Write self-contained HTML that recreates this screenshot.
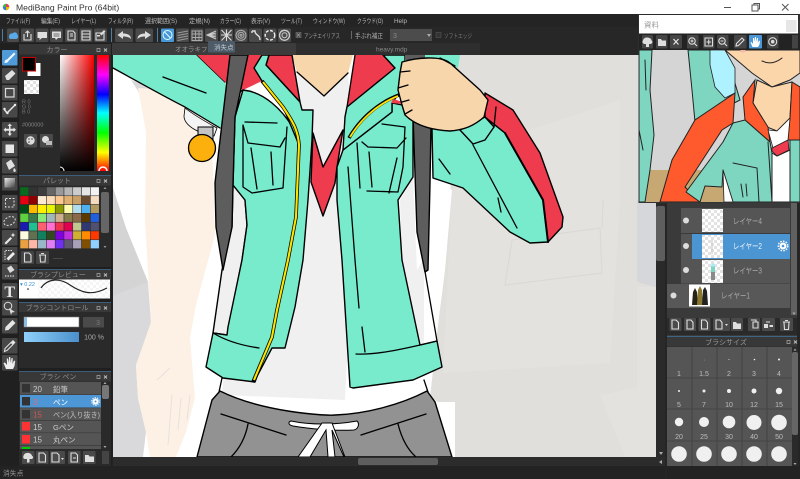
<!DOCTYPE html>
<html><head><meta charset="utf-8"><style>
html,body{margin:0;padding:0;background:#222;width:800px;height:479px;overflow:hidden}
svg{display:block}
text{font-family:"Liberation Sans","Noto Sans CJK JP",sans-serif;font-size:7px;fill:#b0b0b0}
.h{fill:#8d8d8d;text-anchor:middle}
.m{fill:#b8b8b8;font-size:6.5px}
.l{fill:#c0c0c0;font-size:8px}
.n{fill:#bdbdbd;font-size:7px;text-anchor:middle}
.k{fill:none;stroke:#000;stroke-width:1.3;stroke-linejoin:round;stroke-linecap:round}
.o{stroke:#000;stroke-width:1.4;stroke-linejoin:round}
.t{fill:#78ebcd}.r{fill:#ee3b4e}.s{fill:#f0f0f0}.d{fill:#5d5d5d}.c{fill:#f8d6ac}
.p{stroke:#222;stroke-width:1;stroke-linejoin:round}
.pk{fill:none;stroke:#222;stroke-width:1;stroke-linecap:round}
.pt{fill:#7fd6c0}
.b{fill:#4a4a4a}
.w{fill:#dedede}
.wk{fill:none;stroke:#dedede;stroke-width:1.1}
</style></head><body>
<svg width="800" height="479" viewBox="0 0 800 479" xmlns="http://www.w3.org/2000/svg">
<defs><pattern id="ck" width="6" height="6" patternUnits="userSpaceOnUse"><rect width="6" height="6" fill="#fff"/><rect width="3" height="3" fill="#e2e2e2"/><rect x="3" y="3" width="3" height="3" fill="#e2e2e2"/></pattern>
<linearGradient id="hue" x1="0" y1="0" x2="0" y2="1"><stop offset="0" stop-color="#f00"/><stop offset=".17" stop-color="#f0f"/><stop offset=".34" stop-color="#00f"/><stop offset=".5" stop-color="#0ff"/><stop offset=".67" stop-color="#0f0"/><stop offset=".84" stop-color="#ff0"/><stop offset="1" stop-color="#f00"/></linearGradient>
<linearGradient id="sv1" x1="0" y1="0" x2="1" y2="0"><stop offset="0" stop-color="#fff"/><stop offset="1" stop-color="#f00"/></linearGradient>
<linearGradient id="sv2" x1="0" y1="0" x2="0" y2="1"><stop offset="0" stop-color="#000" stop-opacity="0"/><stop offset="1" stop-color="#000"/></linearGradient>
<linearGradient id="bl" x1="0" y1="0" x2="1" y2="0"><stop offset="0" stop-color="#8fd0fa"/><stop offset="1" stop-color="#4a90cc"/></linearGradient>
<linearGradient id="gr" x1="0" y1="0" x2="1" y2="1"><stop offset="0" stop-color="#eee"/><stop offset="1" stop-color="#444"/></linearGradient>
</defs>

<rect width="800" height="479" fill="#222"/>

<!-- CANVAS -->
<rect x="113" y="55" width="543" height="402" fill="#fff"/>
<!-- left grey figure -->
<path d="M113,188 L126,228 L148,282 L151,322 L148,345 L136,365 L138,398 L146,432 L143,457 L113,457 Z" fill="#d9d9db"/>
<path d="M113,188 L126,228 L148,282 L113,296 Z" fill="#d4d4d4"/>
<path d="M131,80 L165,92 L140,94 Z" fill="#d9d9d9"/>
<!-- peach arm -->
<path d="M138,88 L146,132 L145,222 L151,322 L136,365 L138,398 L146,432 L150,457 L176,457 L186,432 L195,398 L190,338 L196,305 L215,235 L213,168 L210,110 L170,90 Z" fill="#fdf1e6"/>
<path d="M157,380 L170,368 M172,395 L168,445 M181,398 L178,430 M190,395 L187,420" stroke="#e6e2de" stroke-width="1" fill="none"/>
<!-- right background -->
<path d="M455,55 L656,55 L656,457 L455,457 L455,402 L438,402 L430,397 L437,333 L450,200 Z" fill="#e0dfdb"/>
<path d="M443,373 L610,363 L620,200 L620,100 L530,130 L452,190 Z" fill="#e3e2de"/>
<path d="M512,240 L600,228 L602,273 L505,285 Z M603,200 L602,228" fill="none" stroke="#d9d8d4" stroke-width="1"/>
<path d="M637,200 H656 V287 L637,282 Z" fill="#d6d7da"/>
<path d="M637,287 H656 V457 H625 L600,395 L637,388 Z" fill="#e3e2de"/>

<!-- left sleeve -->
<path class="t" d="M113,55 L197,55 L225,82 L235,117 L220,128 L185,107 L113,68 Z"/>
<path class="k" d="M197,55 L225,82 M113,68 C135,80 165,97 185,107 L220,128 M163,77 L206,93"/>
<path d="M185,108 C195,116 208,123 217,128 L214,136 C200,134 184,126 184,116 Z" fill="#f4f4f4" stroke="#000" stroke-width=".8"/>
<rect x="198" y="127" width="15" height="16" fill="#c4c4c4" stroke="#000" stroke-width="1"/>
<circle cx="202" cy="148" r="13.500" fill="#fbb00e" stroke="#000" stroke-width="1.300"/>

<!-- shirt -->
<path class="s" d="M297,72 L324,96 L348,73 L352,130 L350,300 L345,400 L222,395 L228,330 L300,100 Z"/>
<path class="s o" d="M233,185 L245,200 L247,225 L242,260 L227,335 L213,333 L222,270 L232,227 Z"/>
<path class="s" d="M400,200 L413,178 L417,270 L423,260 L437,341 L420,345 L402,260 Z"/>
<path d="M432,178 L452,190 L445,270 L437,333 L430,397 L424,340 L424,270 Z" fill="#fff"/>
<path class="k" d="M423,260 L437,341 M222,378 L219,392 M424,380 L428,392"/>

<!-- pants -->
<path d="M220,391 C262,412 325,416 335,415 C365,414 400,405 427,391 L435,402 L452,457 L197,457 L212,400 Z" fill="#929292" stroke="#000" stroke-width="1.400"/>
<path class="k" d="M221,414 L286,435 M361,435 L426,414 M248,424 C245,440 238,450 231,457 M398,424 C402,440 408,450 416,457"/>
<path d="M291,421 C310,425 335,425 357,421 C360,424 358,429 354,430 C335,431 310,429 293,426 C288,425 288,422 291,421 Z" fill="#fff" stroke="#000" stroke-width="1"/>
<path d="M322,423 L298,457 L310,457 L326,430 L328,457 L335,457 L332,430 L344,457 L345,457 L332,423 Z" fill="#fff" stroke="#000" stroke-width="1"/>

<!-- neck and red -->
<path class="c" d="M292,55 L353,55 L348,73 L324,96 L297,72 Z"/>
<path class="k" d="M297,72 L324,96 L348,73"/>
<path class="r" d="M197,55 L262,55 L254,68 L262,81 L243,90 L225,82 Z"/>
<path class="r o" d="M269,55 L292,55 L300,102 L266,65 Z"/>
<path class="r" d="M355,55 L383,55 L395,68 L347,107 Z"/>
<path class="k" d="M355,55 L347,107 L345,117 M383,55 L395,68"/>
<path class="r o" d="M313,133 L323,167 L343,130 L337,167 L335,183 L323,216 L311,182 Z"/>

<!-- left body -->
<path class="t o" d="M243,90 C262,92 283,107 298,137 L296,217 L288,260 L277,310 L272,337 L255,382 L223,378 L206,367 L213,333 L227,335 L228,327 L242,260 L247,225 L245,200 L233,185 L235,117 Z"/>
<path class="t o" d="M254,68 L262,55 L269,55 L266,65 L300,102 L302,110 L313,110 L312,140 L308,200 L303,260 L295,307 L285,348 L272,348 L254,382 L272,337 L296,217 L299,145 L283,107 L262,81 Z"/>
<path class="k" style="stroke-width:3.6;stroke-linecap:butt" d="M262,81 L283,107 C293,122 298,130 299,145 L296,217 L288,260 L277,310 L272,337 L253,382"/>
<path fill="none" stroke="#ffe200" stroke-width="2.100" d="M263,82 L283,107 C293,122 298,130 299,145 L296,217 L288,260 L277,310 L272,337 L254,380"/>
<path class="k" d="M245,122 L277,123 M243,125 L243,187 L252,193 L283,188 L287,127 M243,125 L248,143 L280,147 L285,138 M251,148 L257,189 M271,152 L273,185 M213,333 C228,342 245,346 259,348 M243,90 C238,92 235,100 235,117"/>

<!-- right body -->
<path class="t o" d="M343,150 L392,112 L392,103 L402,105 L413,120 L413,177 L398,200 L402,260 L420,345 L437,341 L442,367 L413,380 L353,388 L350,387 L342,260 L337,200 L337,167 Z"/>
<path class="t o" d="M383,55 L405,55 L405,95 L398,95 L392,103 L392,112 L343,150 L345,117 L347,107 L395,68 Z"/>
<path d="M393,99 L403,102 L402,104 L391,103 Z" fill="#ee3b4e"/>
<path fill="none" stroke="#000" stroke-width="3.400" d="M349,138 C358,122 375,104 399,95"/>
<path fill="none" stroke="#ffe200" stroke-width="1.800" d="M350,137 C359,122 375,105 398,96"/>
<path class="k" d="M382,124 L405,127 L403,167 L398,192 L367,191 M357,143 L360,188 M362,142 L368,147 L397,148 L406,138 M369,152 L372,187 M397,158 L389,193 M348,167 L355,260 L359,308 M362,327 L365,352 M356,354 C375,355 400,350 437,341"/>

<!-- left strap -->
<path class="d o" d="M230,55 L248,55 L235,117 L233,185 L232,227 L223,270 L216,227 L215,183 Z"/>
<!-- right strap -->
<path class="d o" d="M413,115 L431,125 L430,183 L428,270 L425,272 L417,232 Z"/>

<!-- right arm -->
<path class="t o" d="M432,128 L463,130 L485,117 L505,133 L543,200 L548,242 L530,243 L510,232 L463,188 L433,178 Z"/>
<path class="r o" d="M485,93 L513,110 L540,153 L563,217 L562,227 L548,242 L543,200 L505,133 L485,117 Z"/>
<path class="k" style="stroke-width:2" d="M505,133 L543,200 L548,242"/>
<path class="t o" d="M460,130 L485,117 L494,127 L485,140 L473,144 Z"/>
<path class="k" d="M496,107 L494,127 M473,145 L517,228 M498,198 L501,212 M439,159 L450,174"/>
<path class="t" d="M405,55 L460,55 L458,68 L440,60 L405,62 Z"/>
<path class="d" d="M405,55 H425 V60 H405 Z"/>
<path class="c o" d="M402,62 C415,58 440,55 450,63 L480,90 L488,100 L484,117 C475,125 465,130 450,131 C430,130 415,125 405,115 L402,105 L398,90 L400,73 Z"/>
<path class="k" d="M400,72 L410,71 M398,88 L408,85 M402,102 L409,100 M405,114 L412,110 M440,58 L455,66"/>

<!-- scrollbars -->
<rect x="656" y="55" width="11" height="403" fill="#2a2a2a"/>
<rect x="656" y="206" width="9" height="55" rx="2" fill="#5e5e5e"/>
<rect x="113" y="457" width="554" height="9" fill="#2c2c2c"/>
<rect x="358" y="458" width="80" height="7" rx="2" fill="#5e5e5e"/>
<path d="M659,452 L663,452 L661,455 Z M662,460 L662,464 L659,462 Z" fill="#aaa"/>

<!-- TITLE -->
<rect width="800" height="14" fill="#fff"/>
<circle cx="6" cy="7" r="3.200" fill="#3cb54a"/><path d="M6,3.800 A3.200,3.200 0 0 1 9.200,7 L6,7 Z" fill="#ee3b4e"/><path d="M6,7 L9.200,7 A3.200,3.200 0 0 1 6,10.200 Z" fill="#f7b500"/><path d="M6,7 L6,10.200 A3.200,3.200 0 0 1 2.800,7 Z" fill="#2c7fd8"/>
<text x="16" y="10.500" style="font-size:8.600px;fill:#333">MediBang Paint Pro (64bit)</text>
<path d="M724,7.500 L731,7.500" stroke="#555" stroke-width="1"/>
<rect x="752" y="5" width="6" height="6" fill="#fff" stroke="#555"/><path d="M754,5 L754,3.500 L759.500,3.500 L759.500,9 L758,9" fill="none" stroke="#555"/>
<path d="M782,4 L788.500,10.500 M788.500,4 L782,10.500" stroke="#555" stroke-width="1"/>

<!-- MENU -->
<rect y="14" width="800" height="13" fill="#242424"/>
<text class="m" x="6" y="23" textLength="24" lengthAdjust="spacingAndGlyphs">ファイル(F)</text>
<text class="m" x="41" y="23" textLength="19" lengthAdjust="spacingAndGlyphs">編集(E)</text>
<text class="m" x="71" y="23" textLength="25" lengthAdjust="spacingAndGlyphs">レイヤー(L)</text>
<text class="m" x="108" y="23" textLength="25" lengthAdjust="spacingAndGlyphs">フィルタ(R)</text>
<text class="m" x="145" y="23" textLength="32" lengthAdjust="spacingAndGlyphs">選択範囲(S)</text>
<text class="m" x="189" y="23" textLength="21" lengthAdjust="spacingAndGlyphs">定規(N)</text>
<text class="m" x="220" y="23" textLength="21" lengthAdjust="spacingAndGlyphs">カラー(C)</text>
<text class="m" x="251" y="23" textLength="19" lengthAdjust="spacingAndGlyphs">表示(V)</text>
<text class="m" x="281" y="23" textLength="21" lengthAdjust="spacingAndGlyphs">ツール(T)</text>
<text class="m" x="313" y="23" textLength="32" lengthAdjust="spacingAndGlyphs">ウィンドウ(W)</text>
<text class="m" x="357" y="23" textLength="26" lengthAdjust="spacingAndGlyphs">クラウド(O)</text>
<text class="m" x="394" y="23" textLength="13" lengthAdjust="spacingAndGlyphs">Help</text>

<!-- TOOLBAR -->
<rect y="27" width="800" height="16" fill="#272727"/>
<rect x="2" y="29" width="1" height="12" fill="#4d7ea8"/>
<g class="b">
<rect x="7" y="28.500" width="12" height="13.500" rx="1.500"/><rect x="21" y="28.500" width="13" height="13.500" rx="1.500"/><rect x="35.500" y="28.500" width="13" height="13.500" rx="1.500"/><rect x="50" y="28.500" width="13" height="13.500" rx="1.500"/><rect x="65" y="28.500" width="13" height="13.500" rx="1.500"/><rect x="79.500" y="28.500" width="13" height="13.500" rx="1.500"/><rect x="94" y="28.500" width="13" height="13.500" rx="1.500"/>
<rect x="115" y="28.500" width="18" height="13.500" rx="1.500"/><rect x="135.500" y="28.500" width="17.500" height="13.500" rx="1.500"/>
<rect x="176" y="28.500" width="13" height="13.500" rx="1.500"/><rect x="190.500" y="28.500" width="13" height="13.500" rx="1.500"/><rect x="205" y="28.500" width="13" height="13.500" rx="1.500"/><rect x="220" y="28.500" width="13" height="13.500" rx="1.500"/><rect x="234.500" y="28.500" width="13" height="13.500" rx="1.500"/><rect x="249" y="28.500" width="13" height="13.500" rx="1.500"/><rect x="263.500" y="28.500" width="13" height="13.500" rx="1.500"/><rect x="278" y="28.500" width="13" height="13.500" rx="1.500"/>
</g>
<path d="M9,37 C9,34 11,33 12.500,33.500 C14,31.500 17.500,32.500 17.500,35 C19,36 18,39 16,39 L11,39 C9.500,39 9,38 9,37 Z" fill="#5aa9e8"/>
<path class="wk" d="M24,34 L24,40 L31,40 L31,34 M27.500,37 L27.500,31 M25.500,33 L27.500,31 L29.500,33"/>
<path class="w" d="M37.500,32 L47,32 L47,38 L42,38 L39.500,40 L39.500,38 L37.500,38 Z"/>
<path class="w" d="M52,31.500 L61,31.500 L61,38 L58,38 L56,40 L55,38 L52,38 Z"/><path d="M53.500,34 L59.500,34 M53.500,36 L59.500,36" stroke="#4a4a4a" stroke-width=".8"/>
<path class="wk" d="M68,31 L73,31 L75,33 L75,40 L68,40 Z M70,34 L73,34 M70,36 L73,36"/>
<path class="wk" d="M82,31 L90,31 L90,40 L82,40 Z M82,34 L90,34 M82,37 L90,37"/>
<path class="wk" d="M96,33 L104,33 L104,40 L96,40 Z"/><path class="w" d="M100,34 L104,30 L105.500,31.500 L101.500,35.500 Z M97,35 h3 v1.500 h-3 Z"/>
<path class="w" d="M117.500,35 L123,31 L123,33.500 C128,33.500 131,35.500 131,39 C129,37 126,36.500 123,36.500 L123,39 Z"/>
<path class="w" d="M151,35 L145,31 L145,33.500 C140,33.500 137.500,35.500 137.500,39 C139.500,37 142,36.500 145,36.500 L145,39 Z"/>
<rect x="157" y="28" width="1" height="14" fill="#4d7ea8"/><rect x="111" y="28" width="1" height="14" fill="#4d7ea8"/>
<rect x="161" y="28.500" width="13" height="13.500" rx="1" fill="#4a97d8"/>
<circle cx="167.500" cy="35" r="4.500" fill="none" stroke="#dff" stroke-width="1"/><path d="M164.500,32 L170.500,38" stroke="#dff"/>
<path class="wk" style="stroke:#9a9a9a" d="M177.500,33 L188,31 M177.500,35.500 L188,33.500 M177.500,38 L188,36 M177.500,40.500 L188,38.500"/>
<path class="wk" style="stroke:#aaa;stroke-width:.9" d="M192,31 h10 v9.500 h-10 Z M195.500,31 v9.500 M199,31 v9.500 M192,34 h10 M192,37.500 h10"/>
<path class="wk" style="stroke:#ccc" d="M216,31 L207,35 L216,39 M216,35 L207,35 M216,33 L207,35 M216,37 L207,35"/>
<path class="wk" style="stroke:#ddd" d="M221.500,30 L231.500,40.500 M231.500,30 L221.500,40.500 M226.500,29.500 V41 M221,35 H232"/>
<circle cx="241" cy="35.300" r="5" class="wk" style="stroke:#aaa"/><circle cx="241" cy="35.300" r="3" class="wk" style="stroke:#aaa"/><circle cx="241" cy="35.300" r="1" class="wk" style="stroke:#aaa"/>
<path class="wk" style="stroke-width:1.400" d="M252,31 L255,31 C255,36 260,34 260,40 M252,31 v2"/>
<circle cx="270" cy="35.300" r="4.800" fill="none" stroke="#eee" stroke-width="1.400" stroke-dasharray="3 1.500"/>
<circle cx="284.500" cy="35.300" r="5" fill="none" stroke="#ccc" stroke-width="1.300"/><circle cx="284.500" cy="35.300" r="2.500" fill="none" stroke="#ccc" stroke-width="1"/>
<rect x="296" y="32.500" width="5" height="5" fill="#444" stroke="#777" stroke-width=".6"/><path d="M297,33.500 L300,36.500 M300,33.500 L297,36.500" stroke="#aaa" stroke-width=".6"/>
<text x="304" y="38" textLength="36" lengthAdjust="spacingAndGlyphs" style="font-size:6.500px;fill:#9a9a9a">アンチエイリアス</text>
<rect x="351" y="31" width="1" height="8" fill="#666"/>
<text x="355" y="38" textLength="28" lengthAdjust="spacingAndGlyphs" style="font-size:6.500px;fill:#b0b0b0">手ぶれ補正</text>
<rect x="390" y="29" width="42" height="12" fill="#4c4c4c"/>
<text x="393" y="38" style="font-size:7px;fill:#888">3</text><path d="M427,34 L431,34 L429,37 Z" fill="#aaa"/>
<rect x="436" y="32.500" width="5" height="5" fill="#333" stroke="#555" stroke-width=".6"/>
<text x="444" y="38" textLength="28" lengthAdjust="spacingAndGlyphs" style="font-size:6.500px;fill:#777">ソフトエッジ</text>

<!-- TABS -->
<rect x="112" y="43" width="544" height="12" fill="#272727"/>
<rect x="112" y="43" width="184" height="12" rx="1" fill="#3c3c3c"/>
<rect x="296" y="43" width="184" height="12" fill="#2e2e2e"/>
<text x="175" y="51.500" style="font-size:6.500px;fill:#999">オオラキファクト</text>
<text x="376" y="51.500" style="font-size:6.500px;fill:#888">heavy.mdp</text>
<rect x="208" y="41" width="27" height="11.500" rx="1" fill="#4d5b69"/>
<text x="214" y="49.500" style="font-size:6.500px;fill:#c3ccd4">消失点</text>

<!-- TOOLS -->
<rect x="0" y="43" width="18" height="423" fill="#202020"/>
<g fill="#484848">
<rect x="2" y="68" width="15.500" height="15.500" rx="1"/><rect x="2" y="85" width="15.500" height="15.500" rx="1"/><rect x="2" y="102" width="15.500" height="15.500" rx="1"/><rect x="2" y="122" width="15.500" height="15.500" rx="1"/><rect x="2" y="141" width="15.500" height="15.500" rx="1"/><rect x="2" y="158" width="15.500" height="15.500" rx="1"/><rect x="2" y="175" width="15.500" height="15.500" rx="1"/><rect x="2" y="195" width="15.500" height="15.500" rx="1"/><rect x="2" y="213" width="15.500" height="15.500" rx="1"/><rect x="2" y="230" width="15.500" height="15.500" rx="1"/><rect x="2" y="247" width="15.500" height="15.500" rx="1"/><rect x="2" y="264" width="15.500" height="15.500" rx="1"/><rect x="2" y="283" width="15.500" height="15.500" rx="1"/><rect x="2" y="300" width="15.500" height="15.500" rx="1"/><rect x="2" y="318" width="15.500" height="15.500" rx="1"/><rect x="2" y="338" width="15.500" height="15.500" rx="1"/><rect x="2" y="355" width="15.500" height="15.500" rx="1"/>
</g>
<rect x="2" y="50" width="15.500" height="15.500" rx="1" fill="#4f9bd9"/>
<path d="M4.500,63 C4.500,60 6,59.500 7,59.500 L14,52.500 L15.500,54 L8.500,61 C8.500,62 7,63 4.500,63 Z" fill="#eef6ff"/>
<path d="M5,76 L12,70 L15.500,73.500 L9,80 L6.500,80 Z" fill="#e0e0e0"/>
<rect x="5.500" y="88.500" width="8.500" height="8.500" fill="none" stroke="#ddd" stroke-width="1.200"/>
<path d="M4,109 L7,113 L15,105" fill="none" stroke="#e6e6e6" stroke-width="1.500"/><circle cx="4.500" cy="109" r="1.200" fill="#eee"/><circle cx="7.500" cy="113" r="1.200" fill="#eee"/><circle cx="15" cy="105" r="1.200" fill="#eee"/>
<path d="M9.750,123.500 L12,126 L10.500,126 L10.500,128.800 L13.500,128.800 L13.500,127.500 L16,129.800 L13.500,132 L13.500,130.800 L10.500,130.800 L10.500,133.500 L12,133.500 L9.750,136 L7.500,133.500 L9,133.500 L9,130.800 L6,130.800 L6,132 L3.500,129.800 L6,127.500 L6,128.800 L9,128.800 L9,126 L7.500,126 Z" fill="#e4e4e4"/>
<rect x="5.500" y="144.500" width="8.500" height="8.500" fill="#e6e6e6"/>
<path d="M6,163 L11,159.500 L15,166 L9,170 Z" fill="#e0e0e0"/><path d="M14,168 C16,169 16.500,172 14.500,172 C13,172 13,170 14,168 Z" fill="#ddd"/>
<rect x="4.500" y="178" width="10.500" height="9.500" fill="url(#gr)"/>
<rect x="5.500" y="198.500" width="8.500" height="8.500" fill="none" stroke="#ddd" stroke-width="1" stroke-dasharray="2 1.500"/>
<ellipse cx="9.500" cy="221" rx="6" ry="4" transform="rotate(-25 9.500 221)" fill="none" stroke="#ddd" stroke-width="1" stroke-dasharray="2 1.500"/>
<path d="M4.500,243 L10.500,237 L12,238.500 L6,244.500 Z" fill="#e6e6e6"/><path d="M13,232.500 L13.600,234.500 L15.500,235 L13.600,235.600 L13,237.500 L12.400,235.600 L10.500,235 L12.400,234.500 Z" fill="#fff"/>
<path d="M5,260 L5,250.500 L12,250.500" fill="none" stroke="#ddd" stroke-dasharray="1.500 1"/><path d="M6.500,258.500 L13,252 L15,254 L8.500,260.500 Z" fill="#eee"/>
<path d="M7,268 L11,265.500 L14.500,270 L10,273 Z" fill="#ddd"/><path d="M5,276 h10" stroke="#bbb" stroke-width="1.500" stroke-dasharray="1.500 1"/>
<text x="9.750" y="297" style="font-family:'Liberation Serif',serif;font-size:16px;font-weight:bold;fill:#e8e8e8;text-anchor:middle">T</text>
<circle cx="8" cy="306" r="3.800" fill="none" stroke="#ddd" stroke-width="1"/><path d="M9,308 L15,312 L12,312.500 L11,315 Z" fill="#ddd"/>
<path d="M5,330.500 L5.500,327 L12.500,320 L15.500,323 L8.500,330 Z" fill="#e6e6e6"/>
<path d="M4.500,351.500 L5,348.500 L11,342.500 L13,344.500 L7,350.500 Z" fill="none" stroke="#e6e6e6"/><path d="M11,342 L13,340 L15.500,342.500 L13.500,344.500 Z" fill="#e6e6e6"/>
<path d="M6,369 L3.500,363 L5,362.500 L7,365 L6.800,358.500 L8,358.500 L8.800,363 L9,357 L10.200,357 L10.700,363 L11.500,358 L12.700,358 L12.500,364 L14,360.500 L15.200,361 L14.500,366 L13,369 Z" fill="#eee"/>

<!-- COLOR PANEL -->
<rect x="18" y="43" width="94" height="423" fill="#1f1f1f"/>
<rect x="19" y="44" width="92" height="131" fill="#2a2a2a"/>
<rect x="19" y="44" width="92" height="10.500" fill="#383838"/>
<text class="h" x="57" y="52">カラー</text>
<path d="M97,48.500 h3 v3 h-3 Z" fill="none" stroke="#aaa" stroke-width=".7"/><path d="M104,48.500 l3,3 m0,-3 l-3,3" stroke="#bbb" stroke-width="1"/>
<rect x="27.500" y="63" width="13" height="13" fill="#fff"/>
<rect x="22.500" y="57.500" width="13" height="13.500" fill="#000" stroke="#c00" stroke-width="1"/>
<rect x="24" y="80" width="15" height="14" fill="url(#ck)"/>
<text x="22" y="103.500" style="font-size:5.500px;fill:#777">R 0</text><text x="22" y="108.500" style="font-size:5.500px;fill:#777">G 0</text><text x="22" y="113.500" style="font-size:5.500px;fill:#777">B 0</text>
<text x="22" y="126.500" style="font-size:5.500px;fill:#888">#000000</text>
<rect x="24" y="134" width="13" height="13.500" rx="1" fill="#4a4a4a"/><rect x="40" y="134" width="13" height="13.500" rx="1" fill="#4a4a4a"/>
<circle cx="30.500" cy="140.500" r="4.200" fill="#ddd"/><circle cx="29" cy="139" r=".8" fill="#444"/><circle cx="32" cy="139" r=".8" fill="#444"/><circle cx="29" cy="142" r=".8" fill="#444"/>
<circle cx="45.500" cy="139.500" r="3.500" fill="#ddd"/><rect x="46" y="141" width="6" height="4" fill="#bbb"/>
<rect x="60" y="55" width="34" height="116" fill="url(#sv1)"/><rect x="60" y="55" width="34" height="116" fill="url(#sv2)"/>
<path d="M60,167 A4,4 0 0 1 64,171" fill="none" stroke="#fff" stroke-width="1"/>
<rect x="97" y="55" width="12" height="116" fill="url(#hue)"/>
<path d="M99,171 A4,4 0 0 1 107,171" fill="none" stroke="#fff" stroke-width="1.500"/>

<!-- PALETTE -->
<rect x="19" y="175" width="92" height="92" fill="#2a2a2a"/>
<rect x="19" y="175" width="92" height="10.500" fill="#383838"/><rect x="19" y="175" width="92" height=".7" fill="#3f6f96"/>
<text class="h" x="57" y="183">パレット</text>
<path d="M97,179.500 h3 v3 h-3 Z" fill="none" stroke="#aaa" stroke-width=".7"/><path d="M104,179.500 l3,3 m0,-3 l-3,3" stroke="#bbb" stroke-width="1"/>
<g stroke="#2a2a2a" stroke-width=".5">
<rect x="20" y="187" width="8.800" height="8.800" fill="#0a6b1e"/><rect x="28.800" y="187" width="8.800" height="8.800" fill="#333"/><rect x="37.600" y="187" width="8.800" height="8.800" fill="#3c3c3c"/><rect x="46.400" y="187" width="8.800" height="8.800" fill="#666"/><rect x="55.200" y="187" width="8.800" height="8.800" fill="#999"/><rect x="64" y="187" width="8.800" height="8.800" fill="#b5b5b5"/><rect x="72.800" y="187" width="8.800" height="8.800" fill="#ccc"/><rect x="81.600" y="187" width="8.800" height="8.800" fill="#e5e5e5"/><rect x="90.400" y="187" width="8.800" height="8.800" fill="#f2f2f2"/>
<rect x="20" y="195.800" width="8.800" height="8.800" fill="#e60012"/><rect x="28.800" y="195.800" width="8.800" height="8.800" fill="#8f0000"/><rect x="37.600" y="195.800" width="8.800" height="8.800" fill="#fde8d2"/><rect x="46.400" y="195.800" width="8.800" height="8.800" fill="#fcdcb8"/><rect x="55.200" y="195.800" width="8.800" height="8.800" fill="#fbc78f"/><rect x="64" y="195.800" width="8.800" height="8.800" fill="#e0b070"/><rect x="72.800" y="195.800" width="8.800" height="8.800" fill="#c9a067"/><rect x="81.600" y="195.800" width="8.800" height="8.800" fill="#6a4a30"/><rect x="90.400" y="195.800" width="8.800" height="8.800" fill="#f4dcc0"/>
<rect x="20" y="204.600" width="8.800" height="8.800" fill="#004d1a"/><rect x="28.800" y="204.600" width="8.800" height="8.800" fill="#fdbb00"/><rect x="37.600" y="204.600" width="8.800" height="8.800" fill="#fff000"/><rect x="46.400" y="204.600" width="8.800" height="8.800" fill="#e6f500"/><rect x="55.200" y="204.600" width="8.800" height="8.800" fill="#8a9a00"/><rect x="64" y="204.600" width="8.800" height="8.800" fill="#fffcb0"/><rect x="72.800" y="204.600" width="8.800" height="8.800" fill="#b0dcf0"/><rect x="81.600" y="204.600" width="8.800" height="8.800" fill="#4fb0f0"/><rect x="90.400" y="204.600" width="8.800" height="8.800" fill="#b09a60"/>
<rect x="20" y="213.400" width="8.800" height="8.800" fill="#5fd040"/><rect x="28.800" y="213.400" width="8.800" height="8.800" fill="#3a7a4a"/><rect x="37.600" y="213.400" width="8.800" height="8.800" fill="#88e878"/><rect x="46.400" y="213.400" width="8.800" height="8.800" fill="#a0b8b8"/><rect x="55.200" y="213.400" width="8.800" height="8.800" fill="#cdb090"/><rect x="64" y="213.400" width="8.800" height="8.800" fill="#857a4a"/><rect x="72.800" y="213.400" width="8.800" height="8.800" fill="#8a6a4a"/><rect x="81.600" y="213.400" width="8.800" height="8.800" fill="#5a3a00"/><rect x="90.400" y="213.400" width="8.800" height="8.800" fill="#2060e0"/>
<rect x="20" y="222.200" width="8.800" height="8.800" fill="#1a1ab0"/><rect x="28.800" y="222.200" width="8.800" height="8.800" fill="#20c090"/><rect x="37.600" y="222.200" width="8.800" height="8.800" fill="#ff6070"/><rect x="46.400" y="222.200" width="8.800" height="8.800" fill="#ff70d0"/><rect x="55.200" y="222.200" width="8.800" height="8.800" fill="#f03050"/><rect x="64" y="222.200" width="8.800" height="8.800" fill="#e00050"/><rect x="72.800" y="222.200" width="8.800" height="8.800" fill="#c0c890"/><rect x="81.600" y="222.200" width="8.800" height="8.800" fill="#303870"/><rect x="90.400" y="222.200" width="8.800" height="8.800" fill="#505070"/>
<rect x="20" y="231" width="8.800" height="8.800" fill="#fffde0"/><rect x="28.800" y="231" width="8.800" height="8.800" fill="#607050"/><rect x="37.600" y="231" width="8.800" height="8.800" fill="#108060"/><rect x="46.400" y="231" width="8.800" height="8.800" fill="#304a20"/><rect x="55.200" y="231" width="8.800" height="8.800" fill="#8000e0"/><rect x="64" y="231" width="8.800" height="8.800" fill="#c030e0"/><rect x="72.800" y="231" width="8.800" height="8.800" fill="#d0b030"/><rect x="81.600" y="231" width="8.800" height="8.800" fill="#ff8c00"/><rect x="90.400" y="231" width="8.800" height="8.800" fill="#ff3800"/>
<rect x="20" y="239.800" width="8.800" height="8.800" fill="#e8a040"/><rect x="28.800" y="239.800" width="8.800" height="8.800" fill="#ffb8a8"/><rect x="37.600" y="239.800" width="8.800" height="8.800" fill="#98b8c8"/><rect x="46.400" y="239.800" width="8.800" height="8.800" fill="#e080f0"/><rect x="55.200" y="239.800" width="8.800" height="8.800" fill="#7030f0"/><rect x="64" y="239.800" width="8.800" height="8.800" fill="#605870"/><rect x="72.800" y="239.800" width="8.800" height="8.800" fill="#a8a0b8"/><rect x="81.600" y="239.800" width="8.800" height="8.800" fill="#805000"/><rect x="90.400" y="239.800" width="8.800" height="8.800" fill="#90d0ff"/>
</g>
<rect x="101" y="192" width="8" height="41" rx="2" fill="#666"/>
<path d="M103.500,189 L106.500,189 L105,187 Z M103.500,246 L106.500,246 L105,248 Z" fill="#999"/>
<rect x="21" y="251" width="13" height="13" rx="1" fill="#444"/><rect x="36" y="251" width="13" height="13" rx="1" fill="#444"/>
<path class="wk" d="M24.500,253 L29,253 L31,255 L31,262 L24.500,262 Z"/><path class="wk" d="M39,255 L46,255 M40,255 L40.500,262 L45,262 L45.500,255 M41,253.500 L44,253.500"/>
<text x="53" y="260" style="font-size:6px;fill:#777">-----</text>

<!-- BRUSH PREVIEW -->
<rect x="19" y="269" width="92" height="30" fill="#2a2a2a"/>
<rect x="19" y="269" width="92" height="10.500" fill="#383838"/><rect x="19" y="269" width="92" height=".7" fill="#3f6f96"/>
<text class="h" x="58" y="277">ブラシプレビュー</text>
<path d="M97,273.500 h3 v3 h-3 Z" fill="none" stroke="#aaa" stroke-width=".7"/><path d="M104,273.500 l3,3 m0,-3 l-3,3" stroke="#bbb" stroke-width="1"/>
<rect x="19" y="279.500" width="91" height="19" fill="#fff"/><rect x="38" y="279.500" width="72" height="19" fill="url(#ck)" opacity=".35"/>
<text x="20" y="286" style="font-size:5.500px;fill:#3a8fd0">▾ 0.22</text><circle cx="28" cy="289" r=".8" fill="#111"/>
<path d="M41,288 C48,278 60,278 70,285 C82,293 92,296 107,288" fill="none" stroke="#222" stroke-width="1.200"/>

<!-- BRUSH CONTROL -->
<rect x="19" y="302" width="92" height="66" fill="#2a2a2a"/>
<rect x="19" y="302" width="92" height="10" fill="#383838"/><rect x="19" y="302" width="92" height=".7" fill="#3f6f96"/>
<text class="h" x="57" y="310">ブラシコントロール</text>
<path d="M97,306.500 h3 v3 h-3 Z" fill="none" stroke="#aaa" stroke-width=".7"/><path d="M104,306.500 l3,3 m0,-3 l-3,3" stroke="#bbb" stroke-width="1"/>
<rect x="24" y="317" width="55" height="10" fill="#fff" stroke="#777" stroke-width=".6"/><rect x="24.500" y="317.500" width="2.500" height="9" fill="#7fc0f0"/>
<rect x="83" y="317" width="21" height="10.500" fill="#4a4a4a"/><text x="100" y="325" style="font-size:7px;fill:#777;text-anchor:end">3</text>
<rect x="24" y="332" width="55" height="10" fill="url(#bl)"/>
<text x="104" y="339.500" style="font-size:7px;fill:#aaa;text-anchor:end">100 %</text>

<!-- BRUSH LIST -->
<rect x="19" y="371" width="92" height="95" fill="#2a2a2a"/>
<rect x="19" y="371" width="92" height="10.500" fill="#383838"/><rect x="19" y="371" width="92" height=".7" fill="#3f6f96"/>
<text class="h" x="58" y="379">ブラシ ペン</text>
<path d="M97,375.500 h3 v3 h-3 Z" fill="none" stroke="#aaa" stroke-width=".7"/><path d="M104,375.500 l3,3 m0,-3 l-3,3" stroke="#bbb" stroke-width="1"/>
<rect x="20" y="382" width="81" height="67" fill="#555"/>
<rect x="20" y="395" width="81" height="12.500" fill="#4d97d6"/>
<path d="M20,394.700 H101 M20,407.800 H101 M20,420.500 H101 M20,432.800 H101 M20,445.500 H101" stroke="#3a3a3a" stroke-width=".7"/>
<rect x="22" y="384" width="8" height="8.500" fill="#333"/><rect x="22" y="397" width="8" height="8.500" fill="#333"/><rect x="22" y="410" width="8" height="8.500" fill="#333"/><rect x="22" y="422" width="8" height="8.500" fill="#f33"/><rect x="22" y="435" width="8" height="8.500" fill="#f33"/><rect x="22" y="447" width="8" height="2" fill="#0c0"/>
<text x="33" y="392" style="font-size:8px;fill:#ccc">20</text><text x="53" y="392" style="font-size:7.500px;fill:#ccc">鉛筆</text>
<text x="33" y="405" style="font-size:8px;fill:#e66">3</text><text x="53" y="405" style="font-size:7.500px;fill:#fff">ペン</text>
<text x="33" y="417.500" style="font-size:8px;fill:#c55">15</text><text x="53" y="417.500" style="font-size:7.500px;fill:#bbb" textLength="47" lengthAdjust="spacingAndGlyphs">ペン(入り抜き)</text>
<text x="33" y="430" style="font-size:8px;fill:#ccc">15</text><text x="53" y="430" style="font-size:7.500px;fill:#ccc">Gペン</text>
<text x="33" y="442.500" style="font-size:8px;fill:#ccc">15</text><text x="53" y="442.500" style="font-size:7.500px;fill:#ccc">丸ペン</text>
<circle cx="95.500" cy="401.500" r="3" fill="#fff"/><circle cx="95.500" cy="401.500" r="3.800" fill="none" stroke="#fff" stroke-width="1" stroke-dasharray="1.400 1"/><circle cx="95.500" cy="401.500" r="1" fill="#4d97d6"/>
<rect x="102" y="385" width="7" height="14" rx="2" fill="#777"/><path d="M103.500,384 L106.500,384 L105,382 Z M103.500,446 L106.500,446 L105,448 Z" fill="#aaa"/>
<g fill="#4a4a4a"><rect x="22" y="451" width="12.500" height="13" rx="1"/><rect x="36" y="451" width="12.500" height="13" rx="1"/><rect x="50" y="451" width="15" height="13" rx="1"/><rect x="68" y="451" width="12.500" height="13" rx="1"/><rect x="83" y="451" width="12.500" height="13" rx="1"/><rect x="102" y="451" width="7" height="13" fill="#444"/></g>
<path class="w" d="M23.500,456 C24,453.500 26,453 27,453 C29,452.500 32,454 32,456 C33.500,456 33.500,459 31.500,459 L29.500,459 L29.500,462.500 L27,462.500 L27,459 L25,459 C23,459 23,456.500 23.500,456 Z"/>
<path class="wk" d="M39,453 L43.500,453 L45.500,455 L45.500,462 L39,462 Z"/>
<path class="wk" d="M52,453 L57,453 L59,455 L59,462 L52,462 Z"/><path class="w" d="M61,458 l3,0 l-1.500,2 Z"/>
<path class="wk" d="M71,453 L75.500,453 L77.500,455 L77.500,462 L71,462 Z M73,458 L76,458"/>
<path class="w" d="M85,455 L88.500,455 L89.500,456.500 L94,456.500 L94,462 L85,462 Z"/>

<!-- STATUS -->
<rect y="466" width="800" height="13" fill="#232323"/>
<text x="3" y="475.500" style="font-size:6.800px;fill:#999">消失点</text>

<!-- RIGHT DOCK -->
<rect x="665" y="202" width="135" height="277" fill="#252525"/>
<rect x="667" y="202" width="130" height="136" fill="#3a3a3a"/>
<rect x="667" y="202" width="123" height="116" fill="#3a3a3a"/>
<rect x="681" y="208" width="109" height="25" fill="#555"/>
<rect x="681" y="259" width="109" height="24.500" fill="#555"/>
<rect x="667" y="284" width="123" height="24" fill="#585858"/>
<rect x="681" y="234" width="11" height="25" fill="#555"/>
<rect x="692" y="234" width="98" height="25" fill="#4b95d3"/>
<circle cx="686" cy="220.500" r="3" fill="#ddd"/><circle cx="686" cy="246" r="3" fill="#ddd"/><circle cx="686" cy="270" r="3" fill="#ddd"/><circle cx="673.500" cy="295.500" r="3" fill="#ddd"/>
<rect x="702" y="209" width="21" height="23" fill="url(#ck)"/><rect x="702" y="235" width="21" height="23" fill="url(#ck)"/><rect x="702" y="260" width="21" height="23" fill="url(#ck)"/><rect x="689" y="284.500" width="21" height="22" fill="#fff"/>
<path d="M712,240 L712,254" stroke="#ccc" stroke-width="1.200"/>
<rect x="711" y="266" width="4" height="6" fill="#7fd6c0"/><rect x="711" y="272" width="4" height="8" fill="#8a8a8a"/><circle cx="713" cy="265" r="1.800" fill="#a8eaf8"/>
<path d="M692,305 L693,292 L695,288 L697,292 L698,305 Z" fill="#2a2418"/><path d="M697,305 L698,290 L700,286 L702,290 L703,305 Z" fill="#8a7a30"/><path d="M702,305 L703,290 L705,287 L707,291 L708,305 Z" fill="#222"/>
<text class="l" x="733" y="224" textLength="29" lengthAdjust="spacingAndGlyphs" style="fill:#aaa">レイヤー4</text>
<text class="l" x="733" y="249" textLength="29" lengthAdjust="spacingAndGlyphs" style="fill:#f0f6fb">レイヤー2</text>
<text class="l" x="733" y="273.500" textLength="29" lengthAdjust="spacingAndGlyphs" style="fill:#aaa">レイヤー3</text>
<text class="l" x="721" y="298.500" textLength="29" lengthAdjust="spacingAndGlyphs" style="fill:#aaa">レイヤー1</text>
<circle cx="783" cy="246" r="3.500" fill="#fff"/><circle cx="783" cy="246" r="4.800" fill="none" stroke="#fff" stroke-width="1.300" stroke-dasharray="1.600 1.200"/><circle cx="783" cy="246" r="1.300" fill="#4b95d3"/>
<rect x="791" y="202" width="6" height="113" fill="#606060"/><path d="M792.500,312.500 L795.500,312.500 L794,315 Z" fill="#aaa"/>
<rect x="667" y="318" width="130" height="17" fill="#2a2a2a"/>
<g fill="#4a4a4a"><rect x="669.500" y="318" width="12" height="13" rx="1"/><rect x="684" y="318" width="12" height="13" rx="1"/><rect x="698.500" y="318" width="12" height="13" rx="1"/><rect x="713" y="318" width="17" height="13" rx="1"/><rect x="731" y="318" width="12" height="13" rx="1"/><rect x="748" y="318" width="12" height="13" rx="1"/><rect x="762" y="318" width="13" height="13" rx="1"/><rect x="780" y="318" width="13" height="13" rx="1"/></g>
<path class="wk" d="M672,320 L676,320 L678.500,322.500 L678.500,329 L672,329 Z M687,320 L691,320 L693,322.500 L693,329 L687,329 Z M701.500,320 L705.500,320 L707.500,322.500 L707.500,329 L701.500,329 Z M716,320 L720,320 L722,322.500 L722,329 L716,329 Z M753,322 L758,322 L758,328 L753,328 Z M751,320 L756,320 L756,322 M766,322 L770,322 M783,322 L790,322 M784,322 L784.500,329.500 L788.500,329.500 L789,322 M785,320.500 L788,320.500"/>
<path class="w" d="M733,322 L736,322 L737,323.500 L741,323.500 L741,329 L733,329 Z M725,324 l3,0 l-1.500,2 Z M764,324 h4 v4 h-4 Z M769.500,325 h3.500 v2 h-3.500 Z"/>
<rect x="667" y="336" width="130" height="130" fill="#2c2c2c"/>
<rect x="667" y="336" width="130" height="10.500" fill="#383838"/><rect x="667" y="336" width="130" height=".8" fill="#3f6f96"/>
<text class="h" x="726" y="344.500" style="fill:#999">ブラシサイズ</text>
<path d="M787,340.500 h3 v3 h-3 Z" fill="none" stroke="#aaa" stroke-width=".7"/><path d="M794,340.500 l3,3 m0,-3 l-3,3" stroke="#bbb" stroke-width="1"/>
<rect x="667" y="347" width="125" height="119" fill="#555"/>
<path d="M692,347 V466 M717,347 V466 M742,347 V466 M767,347 V466 M667,378 H792 M667,409 H792 M667,441 H792" stroke="#404040" stroke-width=".8"/>
<g fill="#f0f0f0">
<circle cx="704.500" cy="360" r=".3"/><circle cx="729" cy="359.500" r=".5"/><circle cx="754.500" cy="359.500" r=".8"/><circle cx="779" cy="359.500" r="1"/>
<circle cx="679" cy="391" r="1"/><circle cx="704" cy="391" r="1.500"/><circle cx="729" cy="391" r="2"/><circle cx="754" cy="391" r="2.500"/><circle cx="779" cy="391" r="3.200"/>
<circle cx="679" cy="422" r="4.200"/><circle cx="704" cy="422" r="5"/><circle cx="729" cy="422" r="6.300"/><circle cx="754" cy="422.500" r="7.500"/><circle cx="779" cy="422.500" r="7.800"/>
<circle cx="679" cy="454" r="7.800"/><circle cx="704" cy="454" r="7.800"/><circle cx="729" cy="454" r="7.800"/><circle cx="754" cy="454" r="7.800"/><circle cx="779" cy="454" r="7.800"/>
</g>
<text class="n" x="679" y="376">1</text><text class="n" x="704" y="376">1.5</text><text class="n" x="729" y="376">2</text><text class="n" x="754" y="376">3</text><text class="n" x="779" y="376">4</text>
<text class="n" x="679" y="407">5</text><text class="n" x="704" y="407">7</text><text class="n" x="729" y="407">10</text><text class="n" x="754" y="407">12</text><text class="n" x="779" y="407">15</text>
<text class="n" x="679" y="439">20</text><text class="n" x="704" y="439">25</text><text class="n" x="729" y="439">30</text><text class="n" x="754" y="439">40</text><text class="n" x="779" y="439">50</text>
<rect x="792" y="347" width="6" height="119" fill="#2a2a2a"/><rect x="792" y="352" width="6" height="83" rx="2" fill="#666"/>
<path d="M793.500,350.500 L796.500,350.500 L795,348.500 Z M793.500,463 L796.500,463 L795,465 Z" fill="#aaa"/>
<rect x="667" y="466" width="133" height="13" fill="#232323"/>

<!-- PREVIEW WINDOW -->
<rect x="638.500" y="14.500" width="161.500" height="188.500" fill="#333"/>
<rect x="639" y="15" width="159" height="18.500" fill="#fff"/>
<text x="644" y="27.500" style="font-size:7.500px;fill:#9a9a9a">資料</text>
<rect x="786" y="20" width="10.500" height="12" fill="#e6e6e6"/>
<rect x="639" y="33.500" width="161" height="16.500" fill="#232323"/>
<g fill="#454545"><rect x="642" y="35" width="11" height="13.500" rx="1"/><rect x="656" y="35" width="11.500" height="13.500" rx="1"/><rect x="670" y="35" width="12" height="13.500" rx="1"/><rect x="687" y="35" width="11.500" height="13.500" rx="1"/><rect x="703" y="35" width="11.500" height="13.500" rx="1"/><rect x="717" y="35" width="11.500" height="13.500" rx="1"/><rect x="734" y="35" width="12.500" height="13.500" rx="1"/><rect x="767" y="35" width="11.500" height="13.500" rx="1"/><rect x="792" y="35" width="6" height="13.500" fill="#444"/></g>
<rect x="749" y="35" width="13" height="13.500" rx="1" fill="#4b97d8"/>
<path class="w" d="M643,40.500 C643.500,38 645.500,37.500 647,37.500 C649,37.500 651.500,38.500 651.500,40.500 C653,41 652.500,44 650.500,44 L649,44 L649,47 L646,47 L646,44 L644.500,44 C642.500,44 642,41 643,40.500 Z"/>
<path class="w" d="M658,39 L661,39 L662,40.500 L666,40.500 L666,46 L658,46 Z"/>
<path d="M673.500,39 L678.500,44.500 M678.500,39 L673.500,44.500" stroke="#e6e6e6" stroke-width="1.200"/>
<circle cx="692" cy="41" r="3.200" class="wk"/><path class="wk" d="M694.500,43.500 L697,46 M690.500,41 h3 M692,39.500 v3"/>
<path class="wk" d="M705,38 h7.500 v8 h-7.500 Z"/><path class="wk" d="M706.500,42 h4.500 M708.700,39.500 v5"/>
<circle cx="722" cy="41" r="3.200" class="wk"/><path class="wk" d="M724.500,43.500 L727,46 M720.500,41 h3"/>
<path class="wk" d="M736,46 L736.500,43.500 L742,38 L744,40 L738.500,45.500 Z"/>
<path d="M752.500,47 L750.500,42.500 L751.500,42 L753,44 L753,38 L754,38 L754.500,42 L755,37 L756,37 L756.300,42 L757,38 L758,38 L757.800,43 L759,40.500 L760,41 L759.500,44.500 L758,47 Z" fill="#fff"/>
<circle cx="772.700" cy="41.700" r="4" fill="none" stroke="#ddd" stroke-width="1.100"/><circle cx="772.700" cy="41.700" r="1.800" fill="#ddd"/>
<!-- preview art -->
<svg x="639" y="50" width="161" height="152" viewBox="639 50 161 152">
<rect x="639" y="50" width="161" height="152" fill="#d5d5d5"/>
<rect x="639" y="170" width="161" height="32" fill="#c8a872"/>
<path class="pt p" d="M639,50 L652,50 L650,90 L654,135 L650,170 L645,202 L639,202 Z"/>
<path class="pk" d="M645,60 L646,90 M639,130 L643,150"/>
<path class="pt p" d="M688,50 L725,50 L740,100 L720,110 L695,122 L692,90 Z"/>
<path d="M710,50 L725,50 L735,68 L735,93 L725,98 L715,87 L710,65 Z" fill="#aef2ff" stroke="#222" stroke-width=".8"/>
<path d="M725,50 L800,50 L800,73 L790,80 L772,87 L752,73 Z" fill="#fbd6ab" stroke="#222" stroke-width="1"/>
<path d="M757,80 L753,103 L767,127 L777,131 L790,118 L792,82 L772,87 Z" fill="#fbd6ab" stroke="#222" stroke-width="1"/>
<path d="M762,61 Q772,66 782,58" class="pk"/>
<ellipse cx="743" cy="51" rx="3" ry="1.500" fill="#f7b9a8"/>
<path d="M735,93 L695,120 L672,160 L660,202 L700,202 L685,187 L722,130 L733,123 Z" fill="#ff5a2d" stroke="#222" stroke-width="1"/>
<path d="M755,80 L743,97 L745,120 L770,142 L768,127 L753,103 Z" fill="#ff5a2d" stroke="#222" stroke-width="1"/>
<path d="M792,82 L800,87 L800,140 L788,140 L790,118 Z" fill="#ff5a2d" stroke="#222" stroke-width="1"/>
<path class="pt p" d="M733,123 L745,120 L770,142 L772,153 L772,202 L733,202 L723,170 L722,187 L705,186 L700,202 L686,192 L723,142 Z"/>
<path d="M768,130 L777,131 L790,118 L788,140 L773,148 Z" fill="#fff" stroke="#222" stroke-width=".8"/>
<path d="M772,148 L788,140 L789,150 L777,156 L772,151 Z" fill="#ee3b4e" stroke="#222" stroke-width=".8"/>
<path d="M772,153 L777,156 L790,150 L790,202 L772,202 Z" fill="#fff" stroke="#222" stroke-width="1"/>
<path class="pt p" d="M790,140 L800,140 L800,202 L790,202 Z"/>
<path d="M723,170 L733,202 L724,202 Z" fill="#fff" stroke="#222" stroke-width=".8"/>
<path class="pk" d="M733,163 L757,168 L759,202 M741,184 L743,197 M746,184 L747,196 M768,142 L772,202"/>
</svg>
</svg>
</body></html>
